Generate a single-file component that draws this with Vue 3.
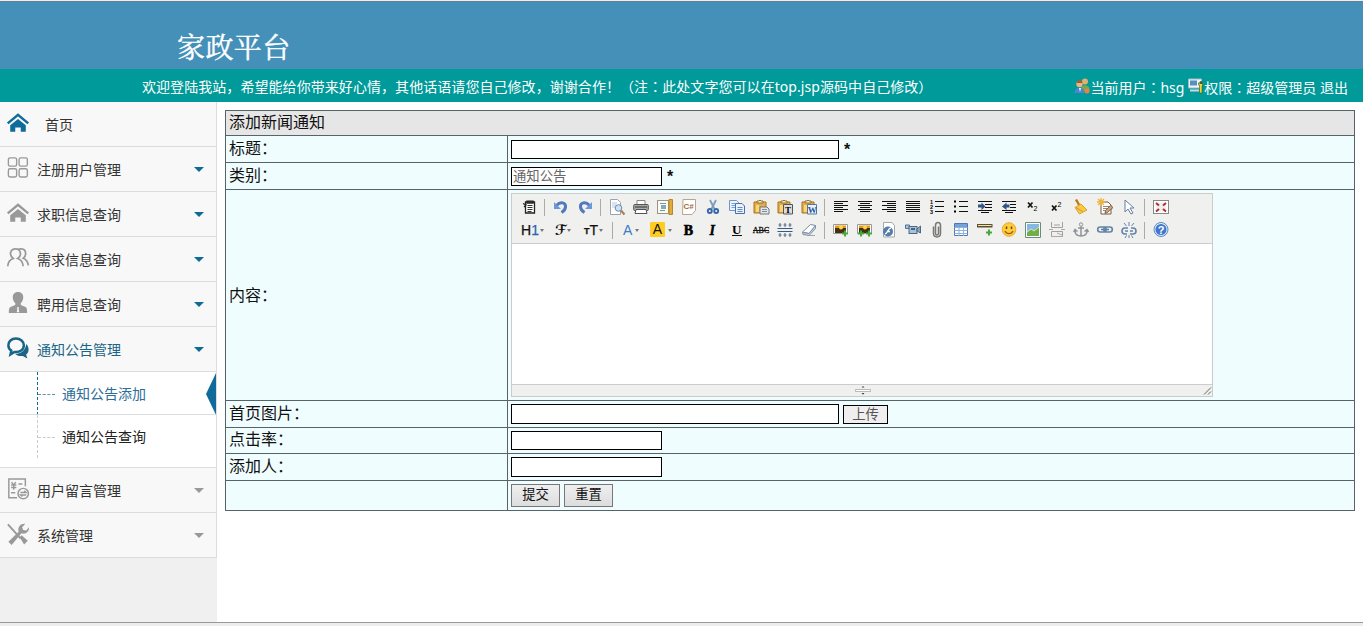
<script setup>
const menu = [
  { label: '首页', icon: 'home', kind: 'top' },
  { label: '注册用户管理', icon: 'grid', arrow: 'blue' },
  { label: '求职信息查询', icon: 'home', arrow: 'blue' },
  { label: '需求信息查询', icon: 'users', arrow: 'blue' },
  { label: '聘用信息查询', icon: 'person', arrow: 'blue' },
  {
    label: '通知公告管理', icon: 'chat', arrow: 'blue', kind: 'open',
    children: [{ label: '通知公告添加', active: true }, { label: '通知公告查询' }],
  },
  { label: '用户留言管理', icon: 'bill', arrow: 'grey' },
  { label: '系统管理', icon: 'tools', arrow: 'grey' },
]

const menuIcons = {
  home: '<path d="M.8 12.500 12 3l11.200 9.500" fill="none" stroke="currentColor" stroke-width="2.600"/><path d="M3.500 14.500 12 7.500l8.500 7V21.500h-5.500v-4.500H9v4.500H3.500z" fill="currentColor"/>',
  grid: '<g fill="none" stroke="currentColor" stroke-width="1.500"><rect x="1.500" y="1" width="9" height="9" rx="1.800"/><rect x="13.200" y="1" width="9" height="9" rx="1.800"/><rect x="1.500" y="12.800" width="9" height="9" rx="1.800"/><rect x="13.200" y="12.800" width="9" height="9" rx="1.800"/></g>',
  users: '<g fill="none" stroke="currentColor" stroke-width="1.900"><path d="M.8 21c.3-4.800 2.500-7.300 6-8.500C4.200 10.500 3.500 8 4 5.700 4.700 3.300 6.700 2 9.200 2c3 0 5.500 1.900 5.500 5.300 0 2.300-1.100 4.100-3 5.200 3.700 1.200 5.600 4.200 5.900 8.500"/><path d="M12 3c1-.9 2.300-1.100 3.700-1 2.700.2 4.600 2.300 4.600 5.200 0 2.200-1 4-2.500 5 3.200 1.500 5 4.100 5.500 7.900"/></g>',
  person: '<path d="M12 0C8 0 6 2.700 6.300 6.200c.2 2.600 1.300 4.700 2.700 5.900v2L4.300 16C2.600 16.700 2 18 2 23h20c0-5-.6-6.300-2.300-7L15 14.100v-2c1.400-1.200 2.500-3.300 2.700-5.900C18 2.700 16 0 12 0z" fill="currentColor"/><path d="m10.900 17 1.100-.7 1.100.7-.4 1.500.7 3.700h-2.800l.7-3.700z" fill="#f8f8f8"/>',
  chat: '<path d="M9.700 1.700C4.800 1.700 1.500 4.900 1.500 9c0 2.700 1.300 4.700 3.200 5.900L3.800 19l4.400-2.700c5.800.7 10.200-2.600 10.200-7.300 0-4.100-3.700-7.300-8.700-7.300z" fill="none" stroke="currentColor" stroke-width="2.700"/><path d="M21 7.500c3.600 3.700 3.300 9-.2 11.700l1.400 4.300-5-2.900c-3.500.5-6.700-.4-8.400-2.400 6.300 0 11.400-3.500 12.200-10.700z" fill="currentColor"/>',
  bill: '<g fill="none" stroke="currentColor" stroke-width="1.600"><path d="M20 9V1H2v20.500h9"/><path d="m5 4.500 2.300 3.200 2.200-3.200M4.500 7.700h5.700M4.500 10.300h5.700M7.300 7.700v5M12.500 6.500h4.300M4.500 16H9"/><circle cx="17.700" cy="17" r="5.700"/><path d="M14.500 15.700h6.200l-2-1.700M21 18.500h-6.200l2 1.700"/></g>',
  tools: '<path d="m1 1.500 14 15.500" stroke="currentColor" stroke-width="2.100"/><path d="m13.800 15.500 2.200-2.200 6.700 6-4 4.200z" fill="currentColor"/><path d="M1.500 20.500 12.700 9.500C11.300 4.200 15 .2 20 .8l-3.500 3.700 1.200 3 3.200.6L24 4.700c.5 5-3.700 8-8.200 6.600L5 24z" fill="currentColor"/>',
}

/* glyphs of the rich text editor toolbar, drawn on a 16x16 grid */
const lines = (rows) =>
  rows.map(([x, w], i) => `<path d="M${x} ${2.5 + i * 2}h${w}" stroke="#111"/>`).join('')
const clip =
  '<path d="M1 3h12v11H1z" fill="#e4ae48" stroke="#a87320"/><path d="M4 4V2h2l1-1 1 1h2v2z" fill="#fff0a8" stroke="#8c7040"/><path d="M3 6h3v7H3z" fill="#f8d77a"/>'
const photo = '<path d="M.500 2.500h14v9H.500z" fill="#fff" stroke="#999"/><path d="M2 3.500h11v3H2z" fill="#e09c1b"/><path d="M2 6h11v5H2z" fill="#46310f"/><circle cx="8" cy="5.500" r="2" fill="#ffd646"/>'
const plus = (x, y) => `<path d="M${x - 3} ${y}h6M${x} ${y - 3}v6" stroke="#46a83e" stroke-width="2"/>`
const chain = '<rect x=".7" y="5" width="8.500" height="5" rx="2.500"/><rect x="6.800" y="5" width="8.500" height="5" rx="2.500"/><path d="M4 7.500h8"/>'

const g = {
  source: '<path d="M4.500 3h9v11h-9V6.500z" fill="#fff" stroke="#222" stroke-width="1.300"/><path d="M6 2.200h6V4H6zM2 4.500l3 1.500-2 2" fill="none" stroke="#222" stroke-width="1.300"/><path d="M6.500 6.500h5M6.500 8.500h5M6.500 10.500h5M6.500 12.500h4" stroke="#333"/>',
  undo: '<path d="M3.500 6.500c4-4.500 9.500-3 9 1.500-.2 2-1.500 4-4 5.500" fill="none" stroke="#5279bd" stroke-width="3"/><path d="M1 3v7h7z" fill="#6c97d8"/>',
  redo: '<path d="M12.500 6.500c-4-4.500-9.500-3-9 1.500.2 2 1.500 4 4 5.500" fill="none" stroke="#5279bd" stroke-width="3"/><path d="M15 3v7H8z" fill="#6c97d8"/>',
  preview: '<path d="M1.500.5h7l3 3v12h-10z" fill="#fff" stroke="#9aa3b0"/><path d="M3 4h5M3 6h4M3 8h3" stroke="#bbc7dc"/><circle cx="9.500" cy="9" r="3.300" fill="#c9e1fa" stroke="#7589a2"/><path d="m12 11.500 3.500 4" stroke="#a88058" stroke-width="2"/>',
  print: '<path d="M4 6V1.500h8V6" fill="#fff" stroke="#888"/><rect x=".7" y="5.500" width="14.600" height="6" rx="1" fill="#aaa" stroke="#555"/><path d="M2 8h12" stroke="#333"/><path d="M3 10.500h10l1 4H2z" fill="#fff" stroke="#555"/>',
  template: '<rect x=".5" y="1.500" width="11" height="13" fill="#fffbe5" stroke="#333" stroke-dasharray="1 1"/><path d="M3 4.500h6M3 11.500h5" stroke="#6b95be"/><path d="M4 6h5v4H4z" fill="#7fa9cc"/><path d="M12 .5h3.500v15H12z" fill="#e5ac35" stroke="#b8862c"/>',
  code: '<path d="M2 .5h12.500v11l-3.500 4H1.500z" fill="#fff" stroke="#b7a68f"/><text x="2.500" y="10" font-family="Liberation Sans" font-size="8" font-weight="700" fill="#9b6b3b">C#</text>',
  cut: '<path d="m5 1 4.500 9M11 1 6.500 10" stroke="#7b9cbd" stroke-width="1.800"/><g fill="none" stroke="#3767a8" stroke-width="1.900"><circle cx="4.800" cy="12" r="2"/><circle cx="11.200" cy="12" r="2"/></g>',
  copy: '<path d="M.5 1.500h7l2 2v8h-9z" fill="#eaf3ff" stroke="#7095c5"/><path d="M2.500 4.500h4M2.500 6.500h4M2.500 8.500h4" stroke="#7ca1cd"/><path d="M6.500 4.500h6.500l2.500 2.500v7.500h-9z" fill="#eaf3ff" stroke="#466fae"/><path d="M8.500 8.500h5M8.500 10.500h5M8.500 12.500h5" stroke="#638bc3"/>',
  paste: clip + '<path d="M7 8h7l2 2v5H7z" fill="#e3e5e4" stroke="#6e7881"/><path d="M9 10.500h5M9 12.500h5" stroke="#7790a5"/>',
  pasteT: clip + '<path d="M6.500 5.500h9v9.500h-9z" fill="#ddd" stroke="#555"/><text x="8" y="13.500" font-family="Liberation Serif" font-size="9" font-weight="700">T</text>',
  pasteW: clip + '<path d="M6.500 5.500h9v9.500h-9z" fill="#eaf2ff" stroke="#55779c"/><text x="6.700" y="13.500" font-family="Liberation Serif" font-size="9" font-weight="700" fill="#26559a">W</text>',
  left: lines([[1, 14], [1, 9], [1, 14], [1, 9], [1, 14], [1, 9]]),
  center: lines([[1, 14], [3, 10], [1, 14], [3, 10], [1, 14], [3, 10]]),
  right: lines([[1, 14], [6, 9], [1, 14], [6, 9], [1, 14], [6, 9]]),
  justify: lines([[1, 14], [1, 14], [1, 14], [1, 14], [1, 14], [1, 14]]),
  ol: '<path d="M6 2.500h9M6 7.500h9M6 12.500h9" stroke="#111"/><g font-family="Liberation Sans" font-size="5.500" font-weight="700"><text x="1" y="4.500">1</text><text x="1" y="9.500">2</text><text x="1" y="14.500">3</text></g>',
  ul: '<path d="M6 2.500h9M6 7.500h9M6 12.500h9" stroke="#111"/><path d="M1 1.500h2v2H1zM1 6.500h2v2H1zM1 11.500h2v2H1z"/>',
  indent: '<path d="M1 2.500h14M8 5.500h7M8 8.500h7M1 11.500h14M4 13.500h8" stroke="#111"/><path d="M1 5.500h3.500V3.500L8.500 7.500l-4 3.500V8.500H1z" fill="#315385"/>',
  outdent: '<path d="M1 2.500h14M9 5.500h6M9 8.500h6M1 11.500h14M4 13.500h8" stroke="#111"/><path d="M8.500 5.500H5.500V3.500L1 7.500l4.500 3.500V8.500h3z" fill="#315385"/>',
  sub: '<path d="m3 3.500 4.500 5M7.500 3.500 3 8.500" stroke="#111" stroke-width="1.700"/><text x="8.500" y="11.500" font-family="Liberation Sans" font-size="7">2</text>',
  sup: '<path d="m3 6.500 4.500 5M7.500 6.500 3 11.500" stroke="#111" stroke-width="1.700"/><text x="8.500" y="7.500" font-family="Liberation Sans" font-size="7">2</text>',
  broom: '<path d="m3 .5 4 7" stroke="#c47418" stroke-width="2.400"/><path d="m2 8.500 6-3.500 6 6-7.500 4z" fill="#f3cb45" stroke="#d8a42d"/><path d="m3 8.500 6.500 4" stroke="#e9883c"/>',
  quick: '<path d="M4 3h7l3 3v9H4z" fill="#fff" stroke="#765840"/><path d="M0 3h8M4-1v8M1 0l6 6M7 0 1 6" stroke="#edb53c" stroke-width="1.300"/><path d="M6 7.500h6M6 9.500h5M6 11.500h5" stroke="#98877a"/><path d="m8.500 11.500 5-5 2.500 2-5.500 5-2.500 1z" fill="#d2a17c" stroke="#765"/>',
  select: '<path d="M4 1v12l3-3 3 5 2-1-3-5h4z" fill="#fff" stroke="#657fa8"/>',
  full: '<rect x=".5" y="1.500" width="15" height="13" fill="#fff" stroke="#888"/><path d="M3 3.500h10v9H3z" fill="#f3eeee"/><path d="m3 4 3 2.500M13 4l-3 2.500M3 12.500 6 10M13 12.500 10 10" stroke="#a9302e" stroke-width="1.900"/>',
  B: '<text x="2.800" y="12.500" font-family="Liberation Serif" font-size="14" font-weight="700" stroke="#000" stroke-width=".6">B</text>',
  I: '<text x="4.500" y="12.500" font-family="Liberation Serif" font-size="14" font-weight="700" font-style="italic" stroke="#000" stroke-width=".4">I</text>',
  U: '<text x="3" y="11.500" font-family="Liberation Serif" font-size="13" font-weight="700">U</text><path d="M3 13.500h10" stroke="#111"/>',
  S: '<text x="-.2" y="11" font-family="Liberation Serif" font-size="9" textLength="16.500" lengthAdjust="spacingAndGlyphs" stroke="#111" stroke-width=".3">ABC</text><path d="M0 8.500h16" stroke="#111"/>',
  lineheight: '<path d="M.5 6.500h15M.5 9.500h15" stroke="#345b84"/><path d="M3 1v4M8 1v4M13 1v4M3 11v4M8 11v4M13 11v4M1.500 3h3M6.500 3h3M11.500 3h3M1.500 13h3M6.500 13h3M11.500 13h3" stroke="#536b86"/>',
  eraser: '<path d="m1.500 10 8-7.500 5 1-6.500 8z" fill="#fff" stroke="#7a8ba1"/><path d="M1.500 10.500 8 11.500l6.500-8v3l-6.500 7-6-1z" fill="#c5d3e6" stroke="#8193aa"/><path d="M8 13.500h6" stroke="#9aa"/>',
  image: photo + plus(12, 11.5),
  images: photo + plus(4, 11.5) + plus(12, 11.5),
  flash: '<path d="M2.500.5h8.500l2.500 3v11.500h-11z" fill="#fff" stroke="#a2a8ae"/><circle cx="7" cy="9.500" r="5" fill="#567caa"/><path d="M10 6c-3 0-3 5-6 6M6 9.500h3" fill="none" stroke="#fff" stroke-width="1.300"/>',
  media: '<path d="M.5 3h4v3.500h-4z" fill="#a9c6df" stroke="#527392"/><rect x="4" y="4.500" width="8" height="7" fill="#a8c2d9" stroke="#4e6883"/><path d="m12 7 3.500-3v7L12 9z" fill="#8ca6bd" stroke="#4e6883"/><path d="M6 7h4" stroke="#4a637d" stroke-width="2"/>',
  file: '<path d="M4.500 4.500v7c0 4.500 7 4.500 7 0V3.500c0-4-5-4-5 0v8c0 2 3 2 3 0v-7" fill="none" stroke="#777" stroke-width="1.500"/>',
  table: '<path d="M1.500 1.500h13v12h-13z" fill="#fff" stroke="#4d78b3"/><path d="M2 2h12v3H2z" fill="#75a2d9"/><path d="M1.500 5.500h13M1.500 8.500h13M1.500 11.500h13M6 5v9M10.500 5v9" stroke="#90b3dc"/>',
  hr: '<path d="M0 2h15.500v3.500H0z" fill="#5b5032"/><path d="M1 3.500h13.500" stroke="#efe5a9"/>' + plus(12, 10.5),
  smile: '<circle cx="8" cy="7.500" r="6.800" fill="#ffcd37" stroke="#e9a935"/><path d="M5.500 4.500v2.500M10.500 4.500v2.500" stroke="#674315" stroke-width="1.500"/><path d="M4 9c1.500 3.500 6.500 3.500 8 0" fill="none" stroke="#9a5c18" stroke-width="1.200"/>',
  map: '<path d="M.5.500h15v15H.5z" fill="#fff" stroke="#6b8b7b"/><path d="M2 2h12v12H2z" fill="#82b9e5"/><path d="m2 11 4-4 3 2 4-4 1 1v8H2z" fill="#70ad4b"/><path d="m2 10 4-3 3 2 5-4" fill="none" stroke="#e8e691"/>',
  pagebreak: '<path d="M2.500 0v5.500h11V0M2.500 15V9.500h11V15M5 3h6" fill="none" stroke="#a0a0a0"/><path d="M0 7.500h4M12 7.500h4M8 11l5 2" stroke="#aaa"/><path d="M2 14.500h12" stroke="#aaa"/>',
  anchor: '<circle cx="8" cy="2.500" r="1.700" fill="none" stroke="#8e9498"/><path d="M8 4.500v10M5 6h6M2 8.500c0 4 3 5.500 6 5.500s6-1.500 6-5.500M.7 10 2 7.500l2.500 2M11.500 9.500 14 7.500l1.500 2.500" fill="none" stroke="#8e9498" stroke-width="1.500"/>',
  link: `<g fill="none" stroke="#6483a7" stroke-width="1.600">${chain}</g>`,
  unlink: '<g fill="none" stroke="#6483a7" stroke-width="1.600"><path d="M7 6H4C0 6 0 12 4 12h2M9 12h3c4 0 4-6 0-6h-2M4 9h3M9 9h3"/><path d="M8 0v4M3 1l2.500 3M13 1l-2.500 3M8 13v3M4 16l1.500-2.500M12 16l-1.500-2.500" stroke-width="1"/></g>',
  help: '<circle cx="8" cy="7.500" r="7" fill="#dce9fa" stroke="#5b88c8"/><circle cx="8" cy="7.500" r="5.500" fill="#3f77cc"/><text x="4.700" y="11.500" font-family="Liberation Sans" font-size="11" font-weight="700" fill="#fff">?</text>',
}

const row1 = 'source | undo redo | preview print template code cut copy paste pasteT pasteW | left center right justify ol ul indent outdent sub sup broom quick select | full'.split(' ')
const row2 = 'B I U S lineheight eraser | image images flash media file table hr smile map pagebreak anchor link unlink | help'.split(' ')
</script>

<template>
  <div class="page">
    <header>
      <div class="brand"><h1>家政平台</h1></div>
      <div class="welcome">
        <span class="greeting">欢迎登陆我站，希望能给你带来好心情，其他话语请您自己修改，谢谢合作！（注<i>：</i>此处文字您可以在top.jsp源码中自己修改）</span>
        <div class="user">
          <svg class="uicon" viewBox="0 0 16 16">
            <circle cx="11" cy="3.500" r="3" fill="#e0b071" /><path d="M7 11c0-5 8-5 8.500 0v2H7z" fill="#75aa4c" />
            <circle cx="5.500" cy="6" r="3.200" fill="#f0b47d" /><path d="M2.500 5c1-4 6-3 6 0z" fill="#a95928" />
            <path d="M.5 15c0-7 10-7 10 0z" fill="#4b86d0" /><path d="m5 10 1 4 1-4z" fill="#fff" /><circle cx="13" cy="13" r="2.500" fill="#e88344" />
          </svg>
          <span>当前用户<i>：</i>hsg</span>
          <svg class="uicon second" viewBox="0 0 16 16">
            <path d="M.5 1h13v9H.5z" fill="#eef4f7" stroke="#a5bac5" /><path d="M2 2.500h7v5H2z" fill="#568fc1" /><path d="M2 12.500h9" stroke="#ccdade" stroke-width="2" />
            <path d="M10.500 5h4v3h-.500v7h-2.500V7h-1z" fill="#e8d934" stroke="#435a25" stroke-width=".6" /><circle cx="13" cy="4.500" r="1.500" fill="#425b37" />
          </svg>
          <span>权限<i>：</i>超级管理员 退出</span>
        </div>
      </div>
    </header>

    <div class="body">
      <nav>
        <template v-for="m in menu" :key="m.label">
          <div class="item" :class="m.kind">
            <svg viewBox="0 0 24 24" v-html="menuIcons[m.icon]"></svg>
            <span>{{ m.label }}</span>
            <b v-if="m.arrow" :class="m.arrow"></b>
          </div>
          <div v-if="m.children" class="children">
            <div v-for="c in m.children" :key="c.label" class="child" :class="{ active: c.active }">
              <span class="branch"></span><span>{{ c.label }}</span>
              <svg v-if="c.active" class="pointer" viewBox="0 0 10 42"><path d="M10 0v42L0 21z" fill="#0f6b99" /></svg>
            </div>
          </div>
        </template>
      </nav>

      <main>
        <div class="form">
          <div class="row head">添加新闻通知</div>
          <div class="row r27"><label>标题：</label><div class="cell"><input class="wide"><em>*</em></div></div>
          <div class="row r27"><label>类别：</label><div class="cell"><input value="通知公告"><em>*</em></div></div>
          <div class="row content">
            <label>内容：</label>
            <div class="cell">
              <div class="editor">
                <div class="toolbar">
                  <div class="tools">
                    <template v-for="(t, i) in row1" :key="i">
                      <span v-if="t === '|'" class="sep"></span>
                      <svg v-else viewBox="0 0 16 16" v-html="g[t]"></svg>
                    </template>
                  </div>
                  <div class="tools">
                    <span class="drop h">H<u>1</u></span>
                    <span class="drop script">ℱ</span>
                    <span class="drop size"><small>T</small>T</span>
                    <span class="sep"></span>
                    <span class="drop colour">A</span>
                    <span class="drop mark"><u>A</u></span>
                    <template v-for="(t, i) in row2" :key="i">
                      <span v-if="t === '|'" class="sep"></span>
                      <svg v-else viewBox="0 0 16 16" v-html="g[t]"></svg>
                    </template>
                  </div>
                </div>
                <div class="paper"></div>
                <div class="status">
                  <svg class="grip" viewBox="0 0 16 10"><path d="M6.500 2.500 8 1l1.500 1.500zM6.500 8 8 9.700 9.500 8z" fill="#444" /><path d="M.5 4.500h15v2H.5z" fill="#fff" stroke="#aaa" stroke-width=".8" /></svg>
                  <svg class="corner" viewBox="0 0 10 10"><path d="m2 9.500 7-7M6 9.500l3-3" stroke="#666" /></svg>
                </div>
              </div>
            </div>
          </div>
          <div class="row r27 pic"><label>首页图片：</label><div class="cell"><input class="wide tall"><button class="upload">上传</button></div></div>
          <div class="row r26"><label>点击率：</label><div class="cell"><input class="hits"></div></div>
          <div class="row r27"><label>添加人：</label><div class="cell"><input class="tall"></div></div>
          <div class="row last"><label></label><div class="cell"><button>提交</button><button>重置</button></div></div>
        </div>
      </main>
    </div>
    <footer></footer>
  </div>
</template>

<style>
body { overflow: hidden; }
</style>

<style scoped>
* { box-sizing: border-box; }
.page { width: 1363px; height: 626px; display: flex; flex-direction: column; background: #fff; font: 14px/20px "Noto Sans", "Noto Sans CJK SC", sans-serif; overflow: hidden; }
i { font-style: normal; font-family: "Noto Sans CJK TC", sans-serif; }
header { height: 102px; flex: none; border-top: 1px solid #e9eff2; }
.brand { height: 68px; background: #4490b9; border-top: 1px solid #66808e; padding: 24px 0 0 177px; }
h1 { margin: 0; font: 400 28px/40px "Noto Serif CJK SC", "Noto Sans CJK SC", serif; color: #fff; letter-spacing: .4px; -webkit-text-stroke: .4px #fff; }
.welcome { height: 33px; background: #009a9a; color: #fff; display: flex; justify-content: space-between; align-items: center; padding: 4px 15px 0 142px; white-space: nowrap; }
.greeting { letter-spacing: .06px; margin-top: -2px; }
.user { display: flex; align-items: center; }
.uicon { width: 16px; height: 16px; margin-top: -4px; }
.second { margin-left: 4px; }

.body { height: 520px; display: flex; }
nav { width: 217px; background: #f0f0f0; flex: none; }
.item { height: 45px; display: flex; align-items: center; padding: 2px 12px 0 7px; background: #f8f8f8; border-bottom: 1px solid #dcdcdc; border-right: 1px solid #dcdcdc; color: #333; }
.item svg { width: 22px; height: 22px; color: #999; margin: -4px 8px 0 0; overflow: visible; }
.item.top svg { color: #0f6b99; margin-right: 16px; }
.item.open, .item.open svg { color: #1a6487; }
.item b { margin-left: auto; border: 5px solid transparent; border-bottom: 0; margin-top: -2px; }
b.blue { border-top-color: #0f6b93; }
b.grey { border-top-color: #999; }
.children { height: 96px; background: #fff; border-bottom: 1px solid #dcdcdc; border-right: 1px solid #dcdcdc; }
.child { height: 43px; margin-left: 37px; border-left: 1px dashed #ccc; display: flex; align-items: center; color: #222; padding-top: 1px; }
.child.active { color: #2d6c96; border-left-color: #0f6b99; position: relative; }
.child.active::after { content: ""; position: absolute; left: -38px; right: 0; bottom: 0; height: 1px; background: #dcdcdc; }
.branch { width: 17px; height: 1px; border-top: 1px dashed #ccc; margin-right: 7px; }
.active .branch { border-color: #5c96b4; }
.pointer { width: 10px; height: 42px; margin-left: auto; }

main { flex: 1; padding: 8px 8px 0; }
.form { width: 1130px; border: 1px solid #56646a; border-bottom: 0; font: 16px/24px "Noto Sans CJK SC", sans-serif; color: #111; background: #f0fdff; }
.row { display: flex; border-bottom: 1px solid #56646a; }
.head { height: 25px; background: #e6e6e6; padding-left: 3px; line-height: 21px; }
.r27 { height: 27px; }
.r26 { height: 26px; }
.content { height: 211px; }
.last { height: 30px; }
label { width: 282px; flex: none; border-right: 1px solid #56646a; padding: 0 0 2px 3px; display: flex; align-items: center; height: 100%; }
.r27 label, .r26 label { align-items: flex-start; line-height: 22px; }
.r26 label { line-height: 21px; }
.cell { flex: 1; display: flex; align-items: center; padding-left: 3px; }
input { width: 151px; height: 19px; border: 1px solid #000; background: #fff; color: #666; font: 13.333px/17px "Noto Sans CJK SC", sans-serif; padding: 0 1px 2px; margin-top: 1px; }
.wide { width: 328px; }
.tall { height: 20px; margin-top: 0; }
.hits { margin-top: -1px; }
em { font: 700 16px/20px "Liberation Sans", sans-serif; margin: 2px 0 0 5px; }
button { width: 49px; height: 23px; margin: 0 4px 0 0; padding: 0 0 3px; border: 1px solid #777; background: linear-gradient(#efefef, #ddd); font: 13.333px/18px "Noto Sans CJK SC", sans-serif; color: #111; }
.upload { width: 45px; height: 19px; margin: 1px 0 0 4px; border-color: #000; background: #f0eeee; color: #555; line-height: 15px; }

.editor { width: 702px; height: 204px; border: 1px solid #ccc; background: #fff; display: flex; flex-direction: column; margin-bottom: 1px; }
.toolbar { height: 50px; background: #f0f0ee; border-bottom: 1px solid #ccc; padding: 2px 0 0 5px; }
.tools { height: 23px; display: flex; align-items: center; }
.tools svg { width: 16px; height: 16px; margin: 0 4px; flex: none; overflow: visible; }
.sep { width: 1px; height: 17px; margin: 0 4px 0 3px; background: #aaa; }
.drop { width: 30px; display: flex; align-items: center; padding-left: 5px; font: 14px/20px "Liberation Sans", sans-serif; margin-top: -1px; }
.drop::after { content: ""; border: 2.5px solid transparent; border-top: 3px solid #777; border-bottom: 0; margin: 2px 0 0 1px; }
.drop u { text-decoration: none; }
.h { width: 32px; padding-left: 4px; -webkit-text-stroke: .25px; }
.h u { color: #2862b8; }
.script { font: 700 14px/20px "DejaVu Sans", sans-serif; padding-left: 6px; }
.size { -webkit-text-stroke: .25px; }
.size small { font-size: 9px; font-weight: 700; margin-top: 3px; }
.colour { color: #3e7bc8; padding-left: 6px; }
.colour::after { margin-left: 3px; }
.mark { padding-left: 3px; }
.mark u { width: 15px; background: #fc2; text-align: center; line-height: 15px; border-radius: 1px; }
.mark::after { margin-left: 3px; }
.paper { flex: 1; }
.status { height: 12px; background: #f0f0ee; border-top: 1px solid #ccc; display: flex; align-items: center; }
.grip { width: 16px; height: 10px; margin-left: 343px; }
.corner { width: 10px; height: 10px; margin-left: auto; }
footer { height: 4px; background: #f0ecec; border-top: 1px solid #999; }
</style>
